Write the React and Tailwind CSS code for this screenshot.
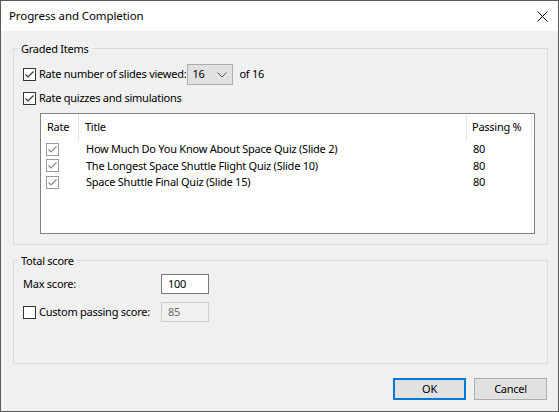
import { useState } from "react";

const font = { fontFamily: '"Noto Sans", "Open Sans", sans-serif' };

function Check({ checked, soft, onChange }) {
  return (
    <span
      onClick={onChange}
      className={
        "flex h-[13px] w-[13px] shrink-0 items-center justify-center border bg-white " +
        (soft ? "border-[#9a9a9a]" : "border-[#333333]")
      }
    >
      {checked && (
        <svg width="11" height="11" viewBox="0 0 11 11">
          <path
            d="M1.5 5.5 L4 8 L9.5 2.5"
            fill="none"
            stroke={soft ? "#8a8a8a" : "#333333"}
            strokeWidth="1.2"
          />
        </svg>
      )}
    </span>
  );
}

const quizzes = [
  { title: "How Much Do You Know About Space Quiz (Slide 2)", pass: 80 },
  { title: "The Longest Space Shuttle Flight Quiz (Slide 10)", pass: 80 },
  { title: "Space Shuttle Final Quiz (Slide 15)", pass: 80 },
];

export default function App() {
  const [slides, setSlides] = useState(true);
  const [quiz, setQuiz] = useState(true);
  const [custom, setCustom] = useState(false);

  return (
    <div
      style={font}
      className="flex h-[412px] w-[559px] flex-col border border-[#5a5a5a] bg-[#f0f0f0] text-[11px] tracking-[-0.25px] text-black"
    >
      {/* title bar */}
      <div className="flex h-[30px] items-center justify-between bg-white pl-[8px] pr-[10px]">
        <span className="text-[11.5px] tracking-[-0.1px]">Progress and Completion</span>
        <svg width="11" height="11" viewBox="0 0 11 11">
          <path d="M0.5 0.5 L10.5 10.5 M10.5 0.5 L0.5 10.5" stroke="#000" strokeWidth="1" />
        </svg>
      </div>

      <div className="flex flex-1 flex-col whitespace-nowrap pl-[12px] pr-[10px]">
        <fieldset className="mt-[10px] h-[204px] border border-[#dcdcdc] pl-[9px] pr-[12px]">
          <legend className="-ml-[5px] px-[3px] leading-[15px]">Graded Items</legend>

          <div className="mt-[8px] flex h-[21px] items-center">
            <Check checked={slides} onChange={() => setSlides(!slides)} />
            <span className="ml-[3px]">Rate number of slides viewed:</span>
            <div className="ml-[1px] flex h-[21px] w-[46px] items-center justify-between border border-[#adadad] bg-[#e1e1e1] pl-[4px] pr-[5px]">
              <span>16</span>
              <svg width="10" height="6" viewBox="0 0 10 6">
                <path d="M0.5 0.5 L5 5 L9.5 0.5" fill="none" stroke="#555" strokeWidth="1" />
              </svg>
            </div>
            <span className="ml-[6px]">of 16</span>
          </div>

          <div className="mt-[5px] flex h-[17px] items-center">
            <Check checked={quiz} onChange={() => setQuiz(!quiz)} />
            <span className="ml-[3px]">Rate quizzes and simulations</span>
          </div>

          <div className="ml-[17px] mt-[6px] h-[121px] border border-[#828282] bg-white">
            <div className="flex h-[27px] items-stretch">
              <div className="flex w-[38px] items-center border-r border-[#e5e5e5] pl-[6px]">Rate</div>
              <div className="flex w-[388px] items-center border-r border-[#e5e5e5] pl-[6px]">Title</div>
              <div className="flex w-[65px] items-center border-r border-[#e5e5e5] pl-[5px]">Passing %</div>
            </div>
            <div className="flex flex-col">
              {quizzes.map((q) => (
                <div key={q.title} className="flex h-[16.5px] items-center">
                  <div className="w-[39px] pl-[5px]">
                    <Check checked soft />
                  </div>
                  <div className="w-[388px] pl-[6px]">{q.title}</div>
                  <div className="pl-[5px]">{q.pass}</div>
                </div>
              ))}
            </div>
          </div>
        </fieldset>

        <fieldset className="mt-[8px] h-[111px] border border-[#dcdcdc] pl-[9px] pr-[12px]">
          <legend className="-ml-[5px] px-[3px] leading-[15px]">Total score</legend>

          <div className="mt-[6px] flex h-[20px] items-center">
            <span className="w-[138px]">Max score:</span>
            <div className="flex h-[20px] w-[48px] items-center border border-[#7a7a7a] bg-white pl-[6px]">
              100
            </div>
          </div>

          <div className="mt-[8px] flex h-[20px] items-center">
            <Check checked={custom} onChange={() => setCustom(!custom)} />
            <span className="ml-[3px] w-[122px]">Custom passing score:</span>
            <div className="flex h-[20px] w-[48px] items-center border border-[#cccccc] bg-[#f0f0f0] pl-[6px] text-[#6d6d6d]">
              85
            </div>
          </div>
        </fieldset>

        <div className="mt-[14px] flex justify-end gap-[8px] pr-[1px]">
          <button className="h-[22px] w-[73px] border-2 border-[#0078d7] bg-[#e1e1e1]">OK</button>
          <button className="h-[22px] w-[73px] border border-[#adadad] bg-[#e1e1e1]">Cancel</button>
        </div>
      </div>
    </div>
  );
}
